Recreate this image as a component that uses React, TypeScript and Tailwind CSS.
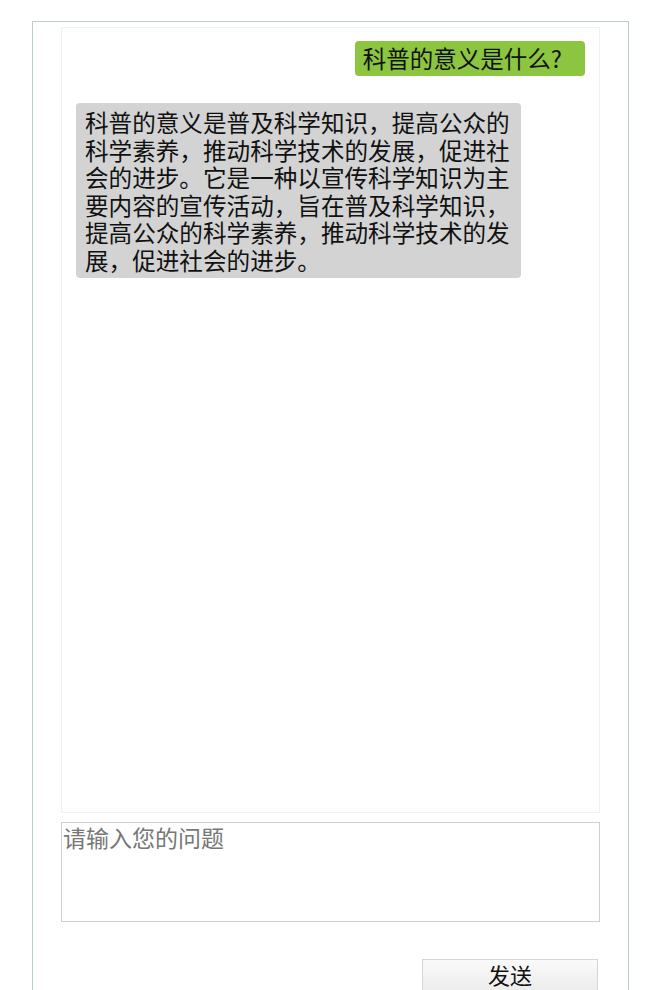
import React from "react";

const font = { fontFamily: '"Noto Sans CJK SC", "Noto Sans", sans-serif' };

export default function App() {
    const answer =
        "科普的意义是普及科学知识，提高公众的科学素养，推动科学技术的发展，促进社会的进步。它是一种以宣传科学知识为主要内容的宣传活动，旨在普及科学知识，提高公众的科学素养，推动科学技术的发展，促进社会的进步。";

    return (
        <div className="h-[990px] w-[660px] overflow-hidden bg-white" style={font}>
            <div className="ml-[32px] mt-[21px] w-[597px] h-[1000px] border border-b-0 border-[#b9cdd0] px-[28px] pt-[5px]">
                {/* Chat history */}
                <div className="h-[786px] border border-[#f0f0f0] flex flex-col px-[14px] pt-[13px]">
                    <div className="flex justify-end">
                        <div className="h-[35px] rounded-[4px] bg-[#8cc53f] pl-[8px] pr-[23px] text-[23.5px] leading-[35px] text-[#111]">
                            科普的意义是什么?
                        </div>
                    </div>
                    <div className="mt-[27px] flex justify-start">
                        <div className="w-[445px] rounded-[4px] bg-[#d3d3d3] px-[9px] pt-[6px] pb-[4px] text-[23.6px] leading-[27.5px] text-[#111]">
                            {answer}
                        </div>
                    </div>
                </div>

                {/* Input */}
                <textarea
                    placeholder="请输入您的问题"
                    className="mt-[9px] block h-[100px] w-full resize-none border border-[#cfcfcf] px-[1px] py-0 text-[23px] leading-[28px] text-[#333] placeholder:text-[#777] outline-none"
                    style={font}
                />

                <div className="mt-[37px] flex justify-end pr-[2px]">
                    <button
                        className="h-[40px] w-[176px] border border-[#d6d6d6] bg-gradient-to-b from-[#fafafa] to-[#e9e9e9] flex items-start justify-center text-[22px] leading-[29px] text-[#111]"
                        style={font}
                    >
                        发送
                    </button>
                </div>
            </div>
        </div>
    );
}
